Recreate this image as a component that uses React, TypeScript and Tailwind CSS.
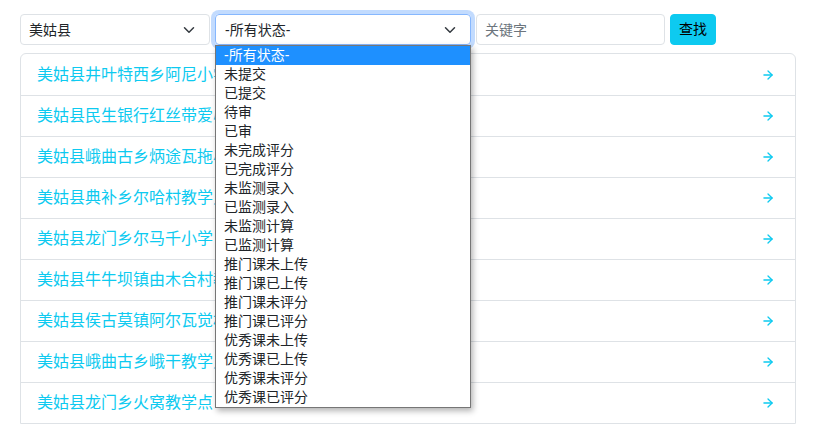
import { ArrowRight } from "lucide-react";

const schools = [
    "美姑县井叶特西乡阿尼小学",
    "美姑县民生银行红丝带爱心小学",
    "美姑县峨曲古乡炳途瓦拖小学",
    "美姑县典补乡尔哈村教学点",
    "美姑县龙门乡尔马千小学",
    "美姑县牛牛坝镇由木合村教学点",
    "美姑县侯古莫镇阿尔瓦觉村小学",
    "美姑县峨曲古乡峨干教学点",
    "美姑县龙门乡火窝教学点",
];

const statuses = [
    "-所有状态-",
    "未提交",
    "已提交",
    "待审",
    "已审",
    "未完成评分",
    "已完成评分",
    "未监测录入",
    "已监测录入",
    "未监测计算",
    "已监测计算",
    "推门课未上传",
    "推门课已上传",
    "推门课未评分",
    "推门课已评分",
    "优秀课未上传",
    "优秀课已上传",
    "优秀课未评分",
    "优秀课已评分",
];

function Chevron() {
    return (
        <svg width="12" height="12" viewBox="0 0 16 16" fill="none" className="absolute right-[14px] top-1/2 -translate-y-1/2">
            <path d="M2 5l6 6 6-6" stroke="#343a40" strokeWidth="2" strokeLinecap="round" strokeLinejoin="round" />
        </svg>
    );
}

export default function App() {
    return (
        <div
            className="min-h-[425px] bg-white pt-[14px] pl-[20px] text-[#212529]"
            style={{ fontFamily: '"Liberation Sans", "Noto Sans CJK SC", sans-serif' }}
        >
            {/* Filters */}
            <div className="flex gap-[5px] h-[31px]">
                <div className="relative w-[190px] h-[31px] border border-[#dee2e6] rounded-[4px] pl-2 flex items-center text-[14px] leading-[20px]">
                    美姑县
                    <Chevron />
                </div>

                <div className="relative w-[256px]">
                    <div className="relative h-[31px] border border-[#86b7fe] rounded-[4px] pl-[9px] flex items-center text-[14px] leading-[20px] shadow-[0_0_0_4px_rgba(13,110,253,0.25)]">
                        -所有状态-
                        <Chevron />
                    </div>
                    {/* open options */}
                    <div className="absolute left-0 top-[31px] w-[256px] z-10 bg-white border border-[#767676] shadow-[2px_3px_6px_rgba(0,0,0,0.3)]">
                        {statuses.map((s, i) => (
                            <div
                                key={s}
                                className={`h-[19px] pl-2 text-[14px] leading-[19px] ${
                                    i === 0 ? "bg-[#1e90ff] text-white" : "text-[#212529]"
                                }`}
                            >
                                {s}
                            </div>
                        ))}
                    </div>
                </div>

                <input
                    type="text"
                    placeholder="关键字"
                    className="w-[189px] h-[31px] border border-[#dee2e6] rounded-[4px] px-2 text-[14px] placeholder:text-[#6c757d] outline-none"
                />

                <button className="h-[31px] px-2 bg-[#0dcaf0] border border-[#0dcaf0] rounded-[4px] text-[14px] text-black">
                    查找
                </button>
            </div>

            {/* School list */}
            <div className="mt-[8px] w-[776px] border border-[#dee2e6] rounded-t-[6px]">
                {schools.map((name, i) => (
                    <div
                        key={name}
                        className={`flex items-center justify-between h-[41px] pl-4 pr-5 text-[16px] leading-[24px] text-[#0dcaf0] ${
                            i > 0 ? "border-t border-[#dee2e6]" : ""
                        }`}
                    >
                        <span>{name}</span>
                        <ArrowRight size={14} strokeWidth={2.25} />
                    </div>
                ))}
            </div>
        </div>
    );
}
